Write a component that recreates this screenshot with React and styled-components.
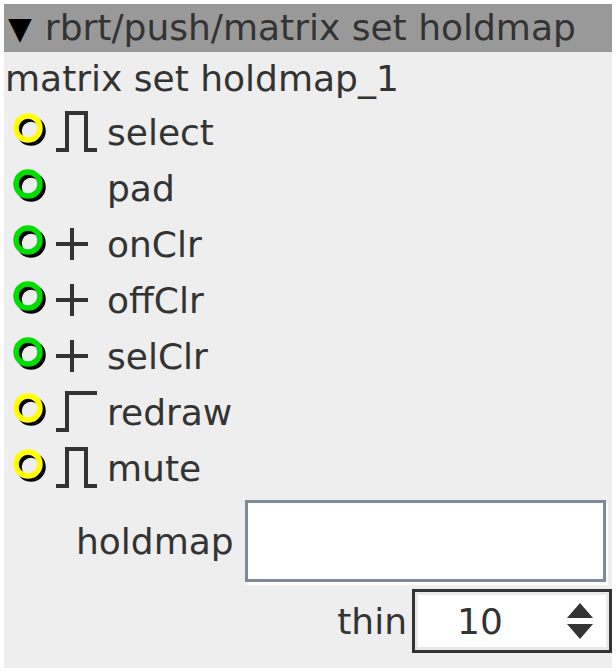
import React from 'react'
import styled, { createGlobalStyle } from 'styled-components'

const GlobalStyle = createGlobalStyle`
  html, body {
    margin: 0;
    padding: 0;
    background: #ffffff;
  }
  body {
    font-family: "DejaVu Sans", "Liberation Sans", sans-serif;
  }
`

const Panel = styled.div`
  margin: 4px;
  width: 608px;
  height: 664px;
  background: #eeeeee;
  color: #333333;
  font-size: 36px;
  display: flex;
  flex-direction: column;
`

const Header = styled.div`
  height: 48px;
  background: #999999;
  display: flex;
  align-items: center;
  gap: 13px;
  padding-left: 4px;
  line-height: 48px;
  white-space: nowrap;
`

const Caret = styled.span`
  color: #000000;
  font-size: 31px;
`

const Title = styled.div`
  height: 52px;
  display: flex;
  align-items: center;
  padding-left: 1px;
  white-space: nowrap;
`

const Rows = styled.div`
  display: flex;
  flex-direction: column;
`

const Row = styled.div`
  height: 56px;
  display: flex;
  align-items: center;
  padding-left: 8px;
`

const Port = styled.span`
  width: 40px;
  height: 40px;
  display: flex;
`

const Kind = styled.span`
  width: 48px;
  height: 44px;
  margin-left: 2px;
  display: flex;
  align-items: center;
  justify-content: flex-start;
`

const Label = styled.span`
  margin-left: 5px;
  white-space: nowrap;
`

const FieldRow = styled.div`
  height: 90px;
  display: flex;
  align-items: center;
  gap: 11px;
  padding-left: 72px;
`

const Entry = styled.div`
  width: 355px;
  height: 76px;
  background: #ffffff;
  border: 3px solid #7e8a96;
  box-shadow: 2px 3px 0 #ffffff;
`

const SpinRow = styled.div`
  height: 70px;
  display: flex;
  align-items: center;
  justify-content: flex-end;
  gap: 5px;
`

const Spin = styled.div`
  box-sizing: border-box;
  width: 200px;
  height: 64px;
  border: 3px solid #333333;
  background: #ffffff;
  box-shadow: inset 0 0 0 3px #e9e9e9;
  display: flex;
  align-items: center;
  justify-content: space-between;
  padding: 0 16px 0 42px;
`

const Arrows = styled.span`
  display: flex;
`

const PortIcon = ({ color }) => (
  <svg width="40" height="40" viewBox="0 0 40 40">
    <circle cx="19" cy="19" r="12" fill="none" stroke="#000" strokeWidth="5.5" />
    <circle cx="16" cy="16" r="12" fill="none" stroke={color} strokeWidth="5.5" />
  </svg>
)

const Pulse = () => (
  <svg width="46" height="44" viewBox="0 0 46 44">
    <path d="M2 40 H13 V3 H32 V40 H43" fill="none" stroke="#333" strokeWidth="4" />
  </svg>
)

const Step = () => (
  <svg width="46" height="44" viewBox="0 0 46 44">
    <path d="M2 40 H13 V3 H43" fill="none" stroke="#333" strokeWidth="4" />
  </svg>
)

const Plus = () => (
  <svg width="46" height="44" viewBox="0 0 46 44">
    <path d="M2 22 H34 M18 6 V38" fill="none" stroke="#333" strokeWidth="4" />
  </svg>
)

const kinds = {
  pulse: Pulse,
  step: Step,
  plus: Plus,
}

const ports = [
  { name: 'select', color: '#ffff00', kind: 'pulse' },
  { name: 'pad', color: '#00dd00', kind: null },
  { name: 'onClr', color: '#00dd00', kind: 'plus' },
  { name: 'offClr', color: '#00dd00', kind: 'plus' },
  { name: 'selClr', color: '#00dd00', kind: 'plus' },
  { name: 'redraw', color: '#ffff00', kind: 'step' },
  { name: 'mute', color: '#ffff00', kind: 'pulse' },
]

export default function App() {
  return (
    <>
      <GlobalStyle />
      <Panel>
        <Header>
          <Caret>▼</Caret>
          <span>rbrt/push/matrix set holdmap</span>
        </Header>
        <Title>matrix set holdmap_1</Title>
        <Rows>
          {ports.map(p => {
            const Icon = p.kind ? kinds[p.kind] : null
            return (
              <Row key={p.name}>
                <Port><PortIcon color={p.color} /></Port>
                <Kind>{Icon && <Icon />}</Kind>
                <Label>{p.name}</Label>
              </Row>
            )
          })}
        </Rows>
        <FieldRow>
          <span>holdmap</span>
          <Entry />
        </FieldRow>
        <SpinRow>
          <span>thin</span>
          <Spin>
            <span>10</span>
            <Arrows>
              <svg width="26" height="38" viewBox="0 0 26 38">
                <path d="M13 1 L26 16 H0 Z M0 22 H26 L13 37 Z" fill="#333" />
              </svg>
            </Arrows>
          </Spin>
        </SpinRow>
      </Panel>
    </>
  )
}
